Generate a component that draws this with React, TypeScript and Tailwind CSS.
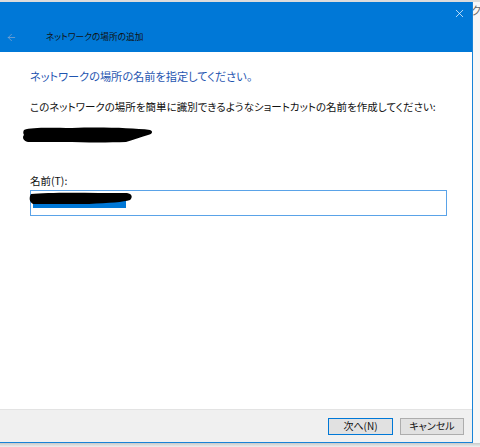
import { ArrowLeft, X } from "lucide-react";

const jp = "font-['Noto_Sans_CJK_JP',sans-serif] [font-feature-settings:'palt']";

function Scribble() {
  return (
    <svg width="132" height="16" viewBox="0 0 132 16" className="block">
      <path
        d="M2 3 C10 0, 30 1, 50 1 C80 0, 110 1, 128 3 C131 4, 131 7, 126 8 C118 10, 112 13, 104 15 C80 16, 40 15, 6 15 C1 14, 0 10, 2 8 C1 6, 1 5, 2 3 Z"
        fill="#000"
      />
    </svg>
  );
}

function NameInput() {
  return (
    <div className="mt-[2px] h-[26px] w-[417px] border border-[#5aa3e8] bg-white relative">
      {/* selected text highlight, scribbled over */}
      <div className="absolute left-[2px] top-[5px] h-[12px] w-[93px] bg-[#0078d7]" />
      <svg width="104" height="14" viewBox="0 0 104 14" className="absolute left-[-2px] top-[1px]">
        <path
          d="M2 2 C20 0, 60 1, 98 1 C103 2, 104 5, 101 8 C95 10, 80 11, 60 12 C40 12, 20 12, 4 12 C0 10, 0 5, 2 2 Z"
          fill="#000"
        />
      </svg>
    </div>
  );
}

export default function App() {
  return (
    <div className={`w-[480px] h-[447px] bg-white flex flex-col overflow-hidden ${jp}`}>
      <div className="h-[2px] bg-[#dcdcdc]" />
      <div className="flex h-[441px]">
        <div className="w-[473px] flex flex-col border-r border-b border-[#1883d7]">
          {/* title bar */}
          <div className="h-[50px] bg-[#0078d7] flex flex-col">
            <div className="h-[23px] flex justify-end items-center pr-[6px]">
              <X className="w-[13px] h-[13px] text-white" strokeWidth={1.3} />
            </div>
            <div className="flex items-center h-[24px]">
              <ArrowLeft className="ml-[6px] w-[11px] h-[11px] text-[#86a7cf]" strokeWidth={1.6} />
              <span className="ml-[29px] text-[8.7px] leading-none text-[#111] whitespace-nowrap">
                ネットワークの場所の追加
              </span>
            </div>
          </div>

          {/* body */}
          <div className="flex-1 bg-white px-[30px] flex flex-col">
            <div className="mt-[16px] text-[11.2px] leading-[16px] text-[#1f55b0] whitespace-nowrap">
              ネットワークの場所の名前を指定してください。
            </div>
            <div className="mt-[16px] text-[10.5px] leading-[14px] text-[#111] whitespace-nowrap">
              このネットワークの場所を簡単に識別できるようなショートカットの名前を作成してください:
            </div>
            <div className="mt-[13px] -ml-[8px]">
              <Scribble />
            </div>
            <div className="mt-[31px] text-[10.5px] leading-[14px] text-[#111]">名前(T):</div>
            <NameInput />
          </div>

          {/* footer */}
          <div className="h-[33px] bg-[#f0f0f0] border-t border-[#e3e3e3] flex items-center justify-end gap-[7px] pr-[8px]">
            <button className="w-[65px] h-[17px] border border-[#0078d7] bg-[#e1e1e1] text-[10px] leading-none text-[#111] flex items-center justify-center">
              次へ(N)
            </button>
            <button className="w-[64px] h-[17px] border border-[#adadad] bg-[#e1e1e1] text-[10px] leading-none text-[#111] flex items-center justify-center">
              キャンセル
            </button>
          </div>
        </div>
        <div className="flex-1 bg-[#f7f7f7] overflow-hidden">
          <div className="mt-[3px] -ml-[2px] text-[11px] leading-none text-[#666]">ク</div>
        </div>
      </div>
      <div className="flex-1 bg-gradient-to-b from-[#c9c9c9] to-[#efefef]" />
    </div>
  );
}
